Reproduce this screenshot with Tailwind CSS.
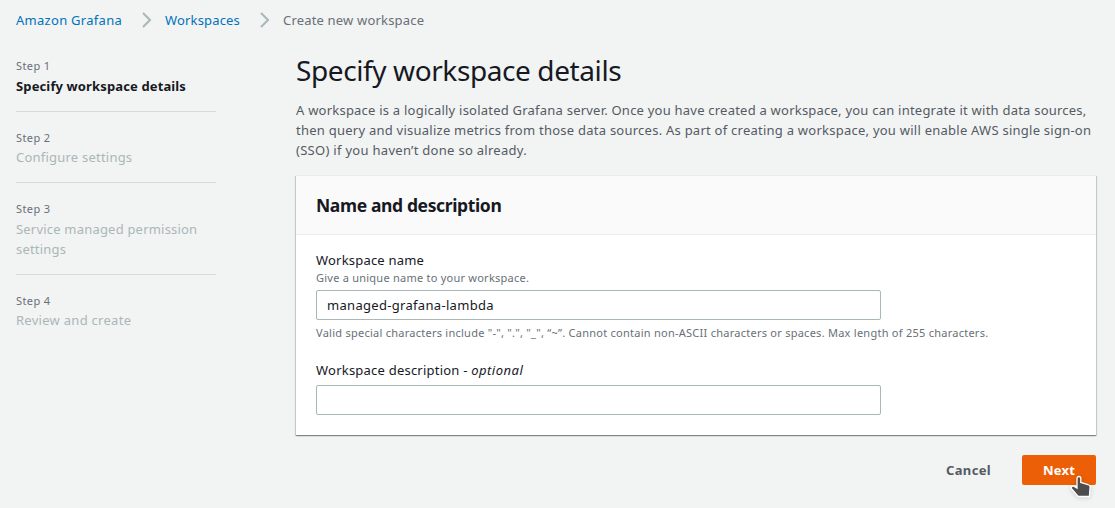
<!DOCTYPE html>
<html lang="en">
<head>
<meta charset="utf-8">
<title>Create new workspace</title>
<script src="https://cdn.jsdelivr.net/npm/@tailwindcss/browser@4"></script>
</head>
<body class="h-[508px] overflow-hidden bg-[#f2f3f3] font-['Noto_Sans',sans-serif] text-[13px] leading-5 text-[#16191f]">
  <nav class="flex h-[30px] items-start pt-2.5 pl-4 text-[#0073bb]">
    <a class="w-[106px] whitespace-nowrap tracking-[0.28px]">Amazon Grafana</a>
    <svg class="ml-5 mt-0.5 mr-3.5 h-4 w-[9px]" viewBox="0 0 9 16" fill="none" stroke="#aab7b8" stroke-width="2"><path d="M1 1l7 7-7 7"/></svg>
    <a class="w-[75px] whitespace-nowrap tracking-[0.17px]">Workspaces</a>
    <svg class="ml-5 mt-0.5 mr-3.5 h-4 w-[9px]" viewBox="0 0 9 16" fill="none" stroke="#aab7b8" stroke-width="2"><path d="M1 1l7 7-7 7"/></svg>
    <span class="whitespace-nowrap tracking-[0.18px] text-[#687078]">Create new workspace</span>
  </nav>
  <div class="flex pl-4">
    <ol class="mt-[27px] w-[200px] shrink-0">
      <li class="border-b border-[#d5dbdb] pb-[15px]">
        <div class="text-[11px] leading-[18px] tracking-[0.4px] text-[#687078]">Step 1</div>
        <div class="mt-px font-bold tracking-[0.13px]">Specify workspace details</div>
      </li>
      <li class="border-b border-[#d5dbdb] pt-[17.4px] pb-[15px]">
        <div class="text-[11px] leading-[18px] tracking-[0.4px] text-[#687078]">Step 2</div>
        <div class="tracking-[0.22px] text-[#aab7b8]">Configure settings</div>
      </li>
      <li class="border-b border-[#d5dbdb] pt-[17px] pb-[15px]">
        <div class="text-[11px] leading-[18px] tracking-[0.4px] text-[#687078]">Step 3</div>
        <div class="mt-px tracking-[0.2px] text-[#aab7b8]">Service managed permission settings</div>
      </li>
      <li class="pt-[16.400px]">
        <div class="text-[11px] leading-[18px] tracking-[0.4px] text-[#687078]">Step 4</div>
        <div class="tracking-[0.28px] text-[#aab7b8]">Review and create</div>
      </li>
    </ol>
    <main class="ml-20 w-[800px] shrink-0">
      <h1 class="mt-[22px] text-[28px] leading-9 tracking-[-0.4px]">Specify workspace details</h1>
      <p class="mt-3 whitespace-nowrap text-[#545b64]"><span class="tracking-[0.224px]">A workspace is a logically isolated Grafana server. Once you have created a workspace, you can integrate it with data sources,</span><br><span class="tracking-[0.245px]">then query and visualize metrics from those data sources. As part of creating a workspace, you will enable AWS single sign-on</span><br><span class="tracking-[0.29px]">(SSO) if you haven’t done so already.</span></p>
      <section class="mt-[15px] h-[260px] border-t border-[#eaeded] bg-white shadow-[0_1px_1px_0_rgba(0,28,36,0.3),1px_1px_1px_0_rgba(0,28,36,0.15),-1px_1px_1px_0_rgba(0,28,36,0.15)]">
        <header class="h-[59px] border-b border-[#eaeded] bg-[#fafafa] px-5 pt-[18px]">
          <h2 class="text-[17.5px] leading-[22px] font-bold tracking-[-0.37px]">Name and description</h2>
        </header>
        <div class="px-5 pt-[15px]">
          <label class="block tracking-[0.2px]">Workspace name</label>
          <div class="text-[11px] leading-4 tracking-[0.24px] text-[#687078]">Give a unique name to your workspace.</div>
          <div class="mt-1 h-[30px] w-[565px] rounded-xs border border-[#aab7b8] px-2.5 pt-1 tracking-[0.31px]">managed-grafana-lambda</div>
          <div class="mt-1 h-4 text-[11px] leading-[18px] tracking-[0.255px] whitespace-nowrap text-[#687078]">Valid special characters include "-", ".", "_", “~”. Cannot contain non-ASCII characters or spaces. Max length of 255 characters.</div>
          <label class="mt-5 block tracking-[0.22px]">Workspace description - <i class="tracking-[0.5px]">optional</i></label>
          <div class="mt-[5px] h-[30px] w-[565px] rounded-xs border border-[#aab7b8]"></div>
        </div>
      </section>
      <div class="mt-5 flex justify-end font-bold">
        <button class="mr-[31px] h-[30px] w-[45px] tracking-[0.35px] whitespace-nowrap text-[#545b64]">Cancel</button>
        <button class="relative h-[30px] w-[74px] rounded-xs bg-[#ec5f07] tracking-[0.2px] text-white">Next
          <svg class="absolute top-[20px] left-[48px] h-[24px] w-[22px] drop-shadow-sm" viewBox="0 0 22 24"><path d="M7 3.500C7 .8 10.800.8 10.800 3.500V7.500L18 9.500C19.600 10 20.200 10.800 20.100 12.500L19.400 21.500H8.200L1.700 13.800C.5 12 2.500 10.300 4.300 11.400L7 13Z" fill="#4d4d4d" stroke="#fff" stroke-width="1.3"/></svg>
        </button>
      </div>
    </main>
  </div>
</body>
</html>
